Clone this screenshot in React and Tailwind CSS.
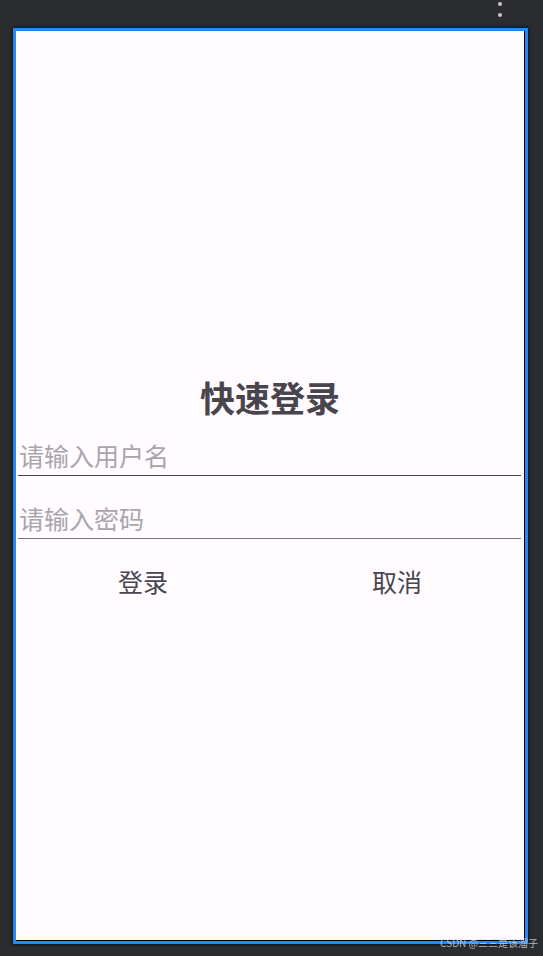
import React from "react";

export default function App() {
  const cjk = { fontFamily: '"Noto Sans CJK SC", "Noto Sans", sans-serif' };
  return (
    <div className="relative w-[543px] h-[956px] bg-[#2b2c30] overflow-hidden" style={cjk}>
      {/* overflow menu dots */}
      <div className="absolute left-[498px] top-[2px] flex flex-col gap-[7px]">
        <div className="w-[4px] h-[4px] rounded-full bg-[#c8c8c8]" />
        <div className="w-[4px] h-[4px] rounded-full bg-[#c8c8c8]" />
      </div>

      <div className="pt-[28px] pl-[13px]">
        <div className="w-[515px] h-[916px] border-[3px] border-[#2688f2] shadow-[0_0_4px_#000]">
          <div className="h-full bg-[#fffbfe] border-r border-b border-black flex flex-col">
            <div className="pt-[346px] text-center text-[35px] leading-[40px] font-bold text-[#49454f]">
              快速登录
            </div>
            <div className="ml-[2px] mr-[3px] pt-[22px] pb-[4px] border-b border-[#49454f]">
              <div className="text-[25px] leading-[32px] text-[#a8a5ac] pl-[1px]">请输入用户名</div>
            </div>
            <div className="ml-[2px] mr-[3px] pt-[26px] pb-[4px] border-b border-[#7a7680]">
              <div className="text-[25px] leading-[32px] text-[#a8a5ac] pl-[1px]">请输入密码</div>
            </div>
            <div className="mt-[26px] flex">
              <div className="flex-1 text-center text-[25px] leading-[32px] text-[#49454f]">登录</div>
              <div className="flex-1 text-center text-[25px] leading-[32px] text-[#49454f]">取消</div>
            </div>
          </div>
        </div>
      </div>

      <div className="absolute right-[5px] top-[937px] text-[10px] leading-[12px] text-[#dcdcdc]/80">
        CSDN @三三是该溜子
      </div>
    </div>
  );
}
